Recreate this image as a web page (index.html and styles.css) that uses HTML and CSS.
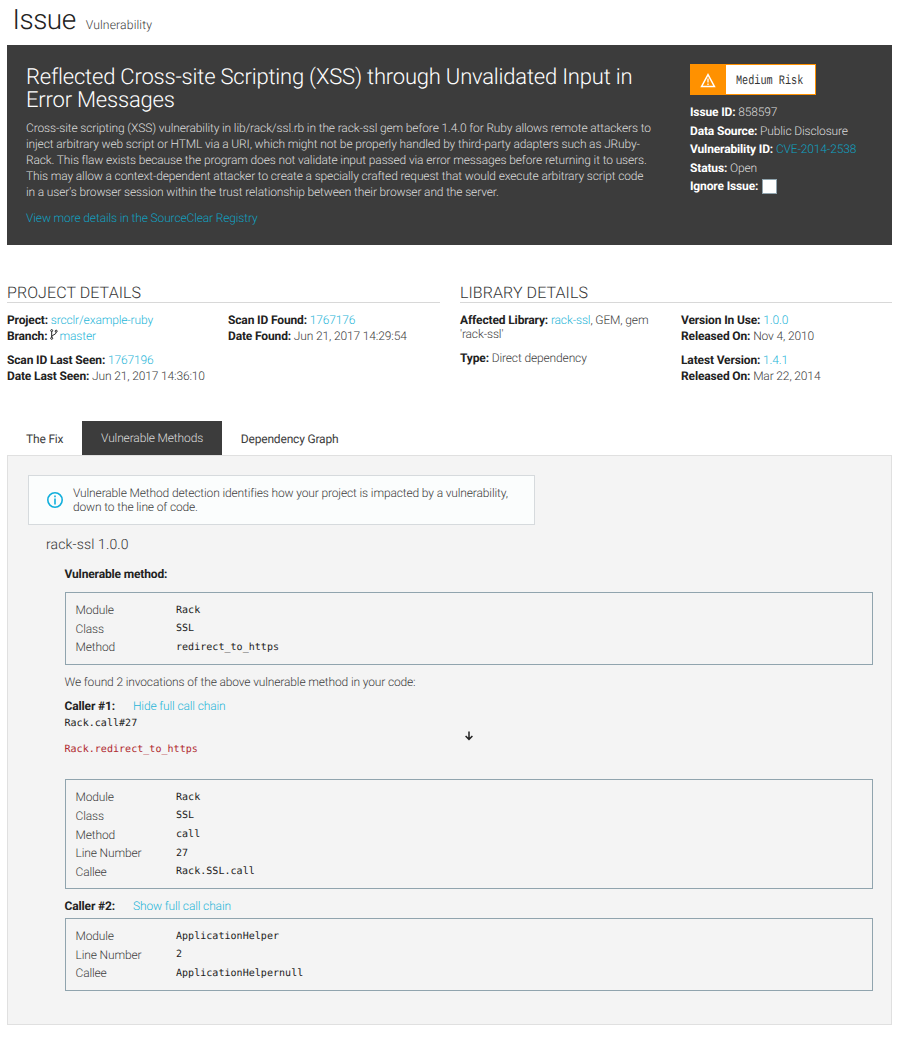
FILE: index.html
```html
<!DOCTYPE html>
<html lang="en">
<head>
<meta charset="utf-8">
<title>Issue</title>
<link rel="stylesheet" href="styles.css">
</head>
<body>
<main class="page">
  <header class="page-head"><h1>Issue</h1><span class="kind">Vulnerability</span></header>

  <section class="hero">
    <div class="hero-main">
      <h2>Reflected Cross-site Scripting (XSS) through Unvalidated Input in<br>Error Messages</h2>
      <p>Cross-site scripting (XSS) vulnerability in lib/rack/ssl.rb in the rack-ssl gem before 1.4.0 for Ruby allows remote attackers to<br>inject arbitrary web script or HTML via a URI, which might not be properly handled by third-party adapters such as JRuby-<br>Rack. This flaw exists because the program does not validate input passed via error messages before returning it to users.<br>This may allow a context-dependent attacker to create a specially crafted request that would execute arbitrary script code<br>in a user's browser session within the trust relationship between their browser and the server.</p>
      <a class="registry">View more details in the SourceClear Registry</a>
    </div>
    <div class="hero-side">
      <div class="risk">
        <span class="risk-icon"><svg width="16" height="15" viewBox="0 0 16 15" fill="none" stroke="#fff"><path d="M8 1.6 14.4 13.4H1.6Z" stroke-width="1.5"/><path d="M8 5.6v4M8 10.6v1.4" stroke-width="1.3"/></svg></span>
        <span class="risk-label"><span class="risk-text">Medium Risk</span></span>
      </div>
      <div class="facts">
        <div><b>Issue ID:</b> 858597</div>
        <div><b>Data Source:</b> Public Disclosure</div>
        <div><b>Vulnerability ID:</b> <a>CVE-2014-2538</a></div>
        <div><b>Status:</b> Open</div>
        <div class="ignore"><b>Ignore Issue:</b><i class="check"></i></div>
      </div>
    </div>
  </section>

  <div class="details">
    <section class="project">
      <h3>PROJECT DETAILS</h3>
      <div class="cols">
        <div class="col">
          <div><b>Project:</b> <a>srcclr/example-ruby</a></div>
          <div><b>Branch:</b> <svg class="branch" width="8" height="11" viewBox="0 0 8 11" fill="none" stroke="#222"><circle cx="1.7" cy="1.6" r="1"/><circle cx="6.2" cy="2.2" r="1"/><circle cx="1.7" cy="9.3" r="1"/><path d="M1.7 2.6v5.7M6.2 3.2C6.2 6 1.9 5.5 1.7 7.8"/></svg> <a>master</a></div>
          <div class="gap"><b>Scan ID Last Seen:</b> <a>1767196</a></div>
          <div><b>Date Last Seen:</b> Jun 21, 2017 14:36:10</div>
        </div>
        <div class="col">
          <div><b>Scan ID Found:</b> <a>1767176</a></div>
          <div><b>Date Found:</b> Jun 21, 2017 14:29:54</div>
        </div>
      </div>
    </section>
    <section class="library">
      <h3>LIBRARY DETAILS</h3>
      <div class="cols">
        <div class="col">
          <div class="tight"><b>Affected Library:</b> <a>rack-ssl</a>, GEM, gem<br>'rack-ssl'</div>
          <div class="gap"><b>Type:</b> Direct dependency</div>
        </div>
        <div class="col">
          <div><b>Version In Use:</b> <a>1.0.0</a></div>
          <div><b>Released On:</b> Nov 4, 2010</div>
          <div class="gap"><b>Latest Version:</b> <a>1.4.1</a></div>
          <div><b>Released On:</b> Mar 22, 2014</div>
        </div>
      </div>
    </section>
  </div>

  <nav class="tabs">
    <span class="tab">The Fix</span><span class="tab active">Vulnerable Methods</span><span class="tab">Dependency Graph</span>
  </nav>

  <section class="panel">
    <div class="info">
      <svg width="18" height="18" viewBox="0 0 18 18" fill="none" stroke="#12afdc"><circle cx="9" cy="9" r="7.2" stroke-width="1.6"/><path d="M9 4.6v1.7M9 7.6v5.8" stroke-width="1.6"/></svg>
      <p>Vulnerable Method detection identifies how your project is impacted by a vulnerability,<br>down to the line of code.</p>
    </div>
    <h4>rack-ssl 1.0.0</h4>
    <div class="report">
      <b class="method-title">Vulnerable method:</b>
      <dl class="box">
        <dt>Module</dt><dd>Rack</dd>
        <dt>Class</dt><dd>SSL</dd>
        <dt>Method</dt><dd>redirect_to_https</dd>
      </dl>
      <p class="found">We found 2 invocations of the above vulnerable method in your code:</p>
      <div class="caller"><b>Caller #1:</b><a>Hide full call chain</a></div>
      <div class="chain">
        <code>Rack.call#27</code>
        <svg class="arrow" width="10" height="10" viewBox="0 0 10 10" fill="none" stroke="#222" stroke-width="1.5"><path d="M5 .5v8M1.6 5 5 8.4 8.4 5"/></svg>
        <code class="vulnerable">Rack.redirect_to_https</code>
      </div>
      <dl class="box">
        <dt>Module</dt><dd>Rack</dd>
        <dt>Class</dt><dd>SSL</dd>
        <dt>Method</dt><dd>call</dd>
        <dt>Line Number</dt><dd>27</dd>
        <dt>Callee</dt><dd>Rack.SSL.call</dd>
      </dl>
      <div class="caller second"><b>Caller #2:</b><a>Show full call chain</a></div>
      <dl class="box">
        <dt>Module</dt><dd>ApplicationHelper</dd>
        <dt>Line Number</dt><dd>2</dd>
        <dt>Callee</dt><dd>ApplicationHelpernull</dd>
      </dl>
    </div>
  </section>
</main>
</body>
</html>
```
FILE: styles.css
```css
* { box-sizing: border-box; margin: 0; padding: 0; }
body { background: #fff; color: #3c3c3c; font: 300 12px/16px Roboto, sans-serif; letter-spacing: -.14px; text-rendering: geometricPrecision; }
b { font-weight: 700; color: #222; }
a { color: #1fb5d8; }
.page { width: 885px; margin-left: 7px; }

.page-head { height: 45px; padding: 4px 0 0 5.5px; display: flex; align-items: baseline; }
.page-head h1 { font-size: 28px; line-height: 32px; font-weight: 300; color: #222; letter-spacing: -.5px; }
.kind { margin-left: 10px; letter-spacing: .12px; font-size: 12.2px; }

.hero { height: 200px; background: #3c3c3c; color: #ddd; display: flex; padding: 19px 19px 0; }
.hero-main { width: 664px; white-space: nowrap; }
.hero h2 { font-size: 22px; line-height: 23px; font-weight: 300; color: #fff; margin: 2px 0 8px; letter-spacing: -.2px; }
.registry { display: block; margin-top: 10px; }
.hero a { color: #10a0c0; }
.hero b { color: #fff; }
.risk { display: flex; width: 126px; height: 31px; border: 1px solid #ff9100; background: #fff; }
.risk-icon { width: 35px; padding-right: 2px; background: #ff9100; display: flex; align-items: center; justify-content: center; }
.risk-icon svg { margin-top: 1px; }
.risk-label { width: 86px; padding-left: 10px; font: 12px/32px "Liberation Mono", monospace; letter-spacing: 0; color: #333; white-space: nowrap; }
.risk-text { display: block; transform: scale(.85, 1.08); transform-origin: left; }
.facts { margin-top: 8px; line-height: 18.6px; }
.ignore { display: flex; align-items: center; }
.check { width: 15px; height: 15px; margin-left: 4px; background: #fff; border: 1px solid #90a4ae; }

.details { display: flex; justify-content: space-between; margin-top: 38px; height: 138px; }
.project { width: 433px; }
.library { width: 432px; }
.details h3 { font-size: 16px; line-height: 19px; height: 20px; font-weight: 300; color: #333; border-bottom: 1px solid #d8d8d8; letter-spacing: .08px; }
.cols { display: flex; padding-top: 9px; }
.col { width: 221px; flex-shrink: 0; white-space: nowrap; }
.gap { margin-top: 8px; }
.tight { line-height: 14px; padding-top: 1px; }
.tight + .gap { margin-top: 9px; }
.branch { margin: 0 -1px 0 -.5px; vertical-align: 0; }

.tabs { display: flex; height: 34px; }
.tab { padding: 0 18.7px 0 19px; line-height: 36px; font-weight: 400; letter-spacing: -.18px; }
.tab.active { background: #3c3c3c; color: #ddd; font-weight: 300; line-height: 34px; letter-spacing: -.14px; }

.panel { height: 570px; background: #f4f4f4; border: 1px solid #e0e0e0; padding: 19px 18px 0 20px; }
.info { width: 507px; height: 50px; display: flex; align-items: center; background: #fbfdfd; border: 1px solid #d6dadd; padding-left: 17px; line-height: 14px; white-space: nowrap; }
.info svg { margin-right: 9px; }
.panel h4 { font-size: 14px; line-height: 18px; font-weight: 300; color: #333; margin: 11px 0 0 18px; letter-spacing: .14px; }
.report { padding-left: 36.5px; }
.method-title { display: block; margin-top: 12px; }
.box { display: grid; grid-template-columns: 100.5px 1fr; grid-auto-rows: 18.6px; line-height: 18px; border: 1px solid #90a4ae; padding: 8.2px 10px 6.8px; margin-top: 10px; }
.box dd, code { font-family: "DejaVu Sans Mono", monospace; font-size: 10px; font-weight: 400; color: #222; letter-spacing: .04px; }
.box dd { padding-top: .5px; }
.found { margin-top: 9.4px; }
.caller { display: flex; gap: 18px; margin-top: 8px; }
.chain { display: flex; flex-direction: column; height: 55px; }
.chain code { line-height: 17px; }
.chain code:first-child { padding-top: 1px; height: 16px; }
.chain .arrow { align-self: center; margin-top: 1px; }
.chain .vulnerable { color: #b0282e; }
.caller.second { margin-top: 9px; }
.second + .box { margin-top: 4px; }
```
